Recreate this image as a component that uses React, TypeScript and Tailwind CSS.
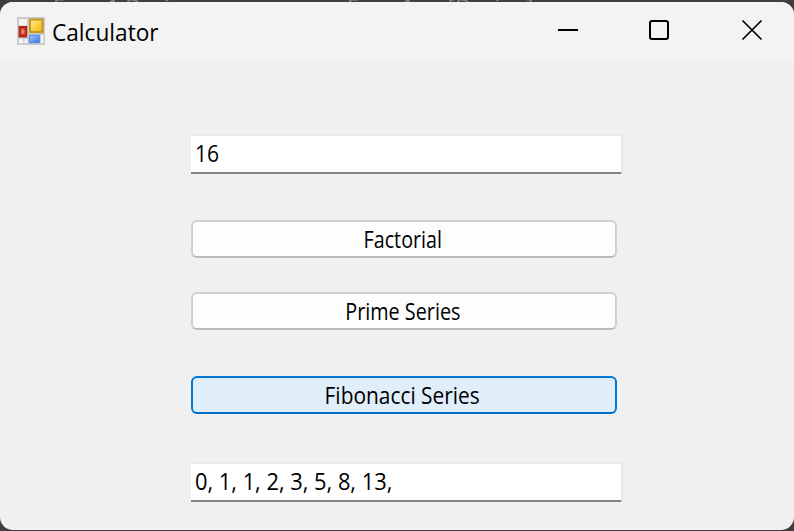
import type { ReactNode } from "react";

function Condensed({ children, className }: { children: ReactNode; className: string }) {
  return (
    <span className={`inline-block whitespace-pre font-['Open_Sans','Noto_Sans',sans-serif] text-[24px] leading-[36px] text-black ${className}`}>
      {children}
    </span>
  );
}

function Field({ children, className }: { children: ReactNode; className: string }) {
  return (
    <div className={`h-[40px] w-[432px] border-t-2 border-r-2 border-[#e9e9e9] ${className}`}>
      <div className="flex h-[38px] items-start border-b-2 border-[#838383] bg-white pl-[4px]">{children}</div>
    </div>
  );
}

function PushButton({ children, className }: { children: ReactNode; className: string }) {
  return (
    <button className={`flex h-[38px] w-[426px] items-center justify-center rounded-[6px] border-2 pr-[3px] ${className}`}>
      {children}
    </button>
  );
}

function FormIcon() {
  return (
    <svg width="28" height="28" viewBox="0 0 28 28">
      <defs>
        <linearGradient id="gold" x1="0" y1="0" x2="1" y2="1">
          <stop offset="0" stopColor="#ffe98c" />
          <stop offset="1" stopColor="#f6bb10" />
        </linearGradient>
        <radialGradient id="red">
          <stop offset="0" stopColor="#f0a090" />
          <stop offset="1" stopColor="#cf3a2a" />
        </radialGradient>
        <linearGradient id="blue" x1="0" y1="0" x2="1" y2="1">
          <stop offset="0" stopColor="#9cc4ff" />
          <stop offset="1" stopColor="#3e78e4" />
        </linearGradient>
      </defs>
      <rect width="28" height="28" fill="#cbcbcb" />
      <rect x="2" y="2" width="8" height="6.500" fill="#f4f4f4" />
      <rect x="2" y="22" width="4" height="4" fill="#f4f4f4" />
      <rect x="7.500" y="22" width="3" height="4" fill="#f4f4f4" />
      <rect x="24" y="18" width="2.500" height="8" fill="#f4f4f4" />
      <rect x="1.600" y="9" width="8.600" height="11.400" fill="#b02418" />
      <rect x="3.400" y="11" width="5" height="7.200" fill="url(#red)" />
      <rect x="12" y="1.500" width="14.500" height="14.500" fill="#c4981a" />
      <rect x="14" y="3.500" width="10.500" height="10.500" fill="url(#gold)" />
      <rect x="12" y="17.700" width="10.800" height="8.500" fill="#4f86ea" />
      <rect x="13" y="18.700" width="8.800" height="6.500" fill="url(#blue)" />
    </svg>
  );
}

export default function App() {
  return (
    <div className="relative h-[531px] w-[794px] overflow-hidden bg-[#403e3e] pt-[2px]">
      <div className="absolute top-[-5px] left-[53px] whitespace-pre font-['Open_Sans',sans-serif] text-[22px] leading-[22px] text-[#8c8884]">
        Form1.Designer.cs
      </div>
      <div className="absolute top-[-5px] left-[347px] whitespace-pre font-['Open_Sans',sans-serif] text-[22px] leading-[22px] tracking-[0.2px] text-[#8c8884]">
        Form1.cs [Design]
      </div>
      <main className="relative h-[528px] overflow-hidden rounded-[13px] bg-[#f0f0f0]">
        <header className="flex h-[60px] items-start justify-between bg-[#f3f3f3]">
          <div className="flex pt-[15px] pl-[17px]">
            <FormIcon />
            <h1 className="-mt-px ml-[7px] origin-left scale-x-[0.985] font-['Open_Sans','Noto_Sans',sans-serif] text-[23px] leading-[32px] text-black">
              Calculator
            </h1>
          </div>
          <svg className="mt-[15px] mr-[30px]" width="208" height="26" viewBox="0 0 208 26" fill="none" stroke="#000" strokeWidth="2">
            <path d="M2 13H22" />
            <rect x="94" y="4" width="18" height="18" rx="2" />
            <path d="M186.500 3.500L205.500 22.500M205.500 3.500L186.500 22.500" strokeWidth="1.700" />
          </svg>
        </header>
        <section className="flex flex-col items-start pt-[72px] pl-[191px]">
          <Field className="">
            <Condensed className="-mt-px origin-left scale-x-[0.88]">16</Condensed>
          </Field>
          <PushButton className="mt-[46px] border-[#d0d0d0] border-b-[#bbbbbb] bg-[#fdfdfd]">
            <Condensed className="scale-x-[0.82]">Factorial</Condensed>
          </PushButton>
          <PushButton className="mt-[34px] border-[#d0d0d0] border-b-[#bbbbbb] bg-[#fdfdfd]">
            <Condensed className="scale-x-[0.825]">Prime Series</Condensed>
          </PushButton>
          <PushButton className="mt-[46px] border-[#0078d4] border-b-[#006cbe] bg-[#e0eef9]">
            <Condensed className="scale-x-[0.87]">Fibonacci Series</Condensed>
          </PushButton>
          <Field className="mt-[48px]">
            <Condensed className="-mt-px origin-left scale-x-[0.91]">0, 1, 1, 2, 3, 5, 8, 13,</Condensed>
          </Field>
        </section>
      </main>
    </div>
  );
}
